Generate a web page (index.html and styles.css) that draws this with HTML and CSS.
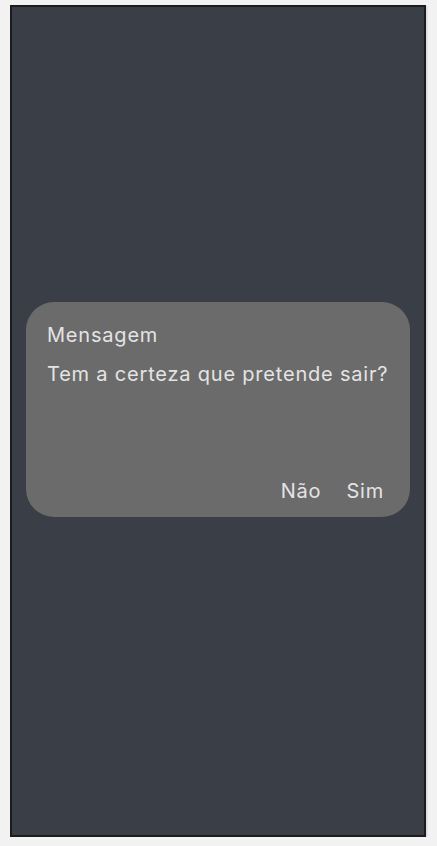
FILE: index.html
```html
<!DOCTYPE html>
<html lang="pt">
<head>
<meta charset="utf-8">
<title>Mensagem</title>
<link rel="stylesheet" href="styles.css">
</head>
<body>
<div class="phone">
  <div class="dialog">
    <div class="title">Mensagem</div>
    <div class="message">Tem a certeza que pretende sair?</div>
    <div class="actions">
      <span class="btn">Não</span>
      <span class="btn">Sim</span>
    </div>
  </div>
</div>
</body>
</html>
```
FILE: styles.css
```css
html, body {
  margin: 0;
  padding: 0;
  background: #f2f2f2;
}
body {
  padding: 5px 0 0 10px;
  font-family: Inter, "Noto Sans", sans-serif;
}
.phone {
  box-sizing: border-box;
  width: 416px;
  height: 832px;
  background: #3a3e47;
  border: 2px solid #1c1c1c;
  box-shadow: 1px 1px 2px rgba(0,0,0,0.15);
  display: flex;
  flex-direction: column;
  justify-content: center;
  padding: 0 14px 23px 14px;
}
.dialog {
  box-sizing: border-box;
  height: 215px;
  background: #6b6b6b;
  border-radius: 28px;
  padding: 21px 27px 14px 21px;
  display: flex;
  flex-direction: column;
  color: #e4e4e4;
  font-size: 20px;
  line-height: 24px;
  letter-spacing: 0.8px;
}
.title {
  margin-bottom: 15px;
}
.message {
  flex: 1;
  white-space: nowrap;
}
.actions {
  display: flex;
  justify-content: flex-end;
  gap: 25px;
}
.btn:last-child {
  margin-right: -1px;
}
```
